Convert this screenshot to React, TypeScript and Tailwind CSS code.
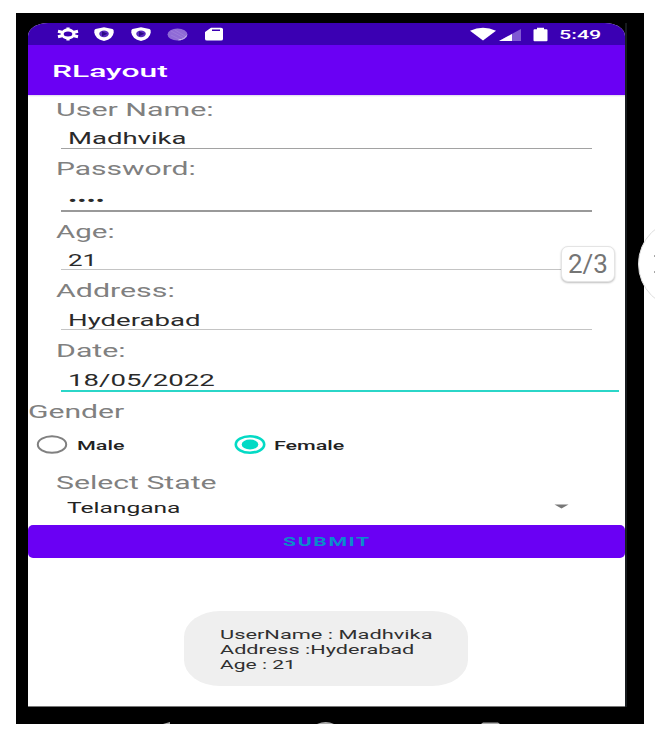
import { useLayoutEffect, useRef, useState } from "react";
import type { ReactNode } from "react";

type WideProps = { children: ReactNode; width: number; className?: string };

/* Text stretched horizontally to fill an exact width. */
function Wide({ children, width, className = "" }: WideProps) {
  const ref = useRef<HTMLSpanElement>(null);
  const [scale, setScale] = useState(1);
  useLayoutEffect(() => {
    if (ref.current) setScale(width / ref.current.offsetWidth);
  }, [width]);
  return (
    <span className={`block shrink-0 ${className}`} style={{ width }}>
      <span
        ref={ref}
        className="inline-block origin-left whitespace-pre"
        style={{ transform: `scaleX(${scale})` }}
      >
        {children}
      </span>
    </span>
  );
}

const label = "flex items-center text-[18px] leading-none text-[#808080]";
const value = "flex items-center pl-[7px] text-[17px] leading-none text-[#2a2a2a]";

function StatusBar() {
  return (
    <div className="flex h-[22px] items-center bg-[#3b00b3] text-white">
      <svg className="ml-[28px] h-[14px] w-[24px]" viewBox="0 0 24 14">
        <ellipse cx="12" cy="7" rx="5.800" ry="4" fill="none" stroke="#fff" strokeWidth="3" />
        <path
          d="M12 .5v2.500M12 11v2.500M2 4.300l4 .9M2 9.700l4-.9M22 4.300l-4 .9M22 9.700l-4-.9"
          stroke="#fff"
          strokeWidth="3.200"
        />
      </svg>
      {[0, 1].map((i) => (
        <svg key={i} className="ml-[14px] mr-[3px] h-[14px] w-[20px]" viewBox="0 0 20 14" fill="currentColor">
          <path d="M10 .3l8.500 1.800Q20 2.500 19.700 5.500 19 12 10 14 1 12 .3 5.500 0 2.500 1.500 2.100z" />
          <ellipse cx="10" cy="6.800" rx="4.800" ry="3.400" fill="#5a2bc0" />
          <path d="M8 4.300v5L13.500 6.800z" fill="#2c0a85" />
        </svg>
      ))}
      <svg className="ml-[13px] h-[13px] w-[21px]" viewBox="0 0 21 13">
        <ellipse cx="10.500" cy="6.500" rx="10" ry="6" fill="#8f6bd6" />
        <path d="M4 3l13 7M4 7l10 5M8 2l10 6" stroke="#9c7bdb" strokeWidth="1" />
        <path d="M19.500 7.500a10 6 0 0 1-8 4.500" stroke="#d0c0f0" fill="none" />
      </svg>
      <svg className="ml-[16px] h-[14px] w-[20px]" viewBox="0 0 20 14" fill="currentColor">
        <path fillRule="evenodd" d="M7 .8h10q2 0 2 1.500v9.700q0 1.500-2 1.500H3q-2 0-2-1.500V5zM8 2.600v1.300h8V2.600z" />
      </svg>
      <svg className="ml-auto h-[14px] w-[28px]" viewBox="0 0 28 14" fill="currentColor">
        <path d="M1 3.800Q14-2.200 27 3.800L14 13.600z" />
      </svg>
      <svg className="ml-[2px] h-[13px] w-[22px]" viewBox="0 0 22 13">
        <path d="M0 13L22 1v12z" fill="#8159d3" />
        <path d="M0 13L13 6v7z" fill="#fff" />
      </svg>
      <svg className="ml-[12px] h-[15px] w-[15px]" viewBox="0 0 15 15" fill="currentColor">
        <path d="M4 .7h7v1.600h2.500q1 0 1 1v10q0 1-1 1h-12q-1 0-1-1v-10q0-1 1-1H4z" />
      </svg>
      <Wide width={43} className="ml-[11px] mr-[23px] text-[13px] font-medium leading-none">5:49</Wide>
    </div>
  );
}

function Radio({ checked }: { checked?: boolean }) {
  return (
    <svg className="h-[20px] w-[32px] shrink-0" viewBox="0 0 32 20">
      <ellipse cx="16" cy="9.500" rx="14.200" ry="8.200" fill="none" stroke={checked ? "#03dac5" : "#808080"} strokeWidth={checked ? 2.600 : 2} />
      {checked && <ellipse cx="16" cy="9.500" rx="8.300" ry="5" fill="#03dac5" />}
    </svg>
  );
}

function Form() {
  return (
    <div className="flex flex-col bg-white">
      <div className="h-[2px] bg-gradient-to-b from-[#ddd4ea] to-white" />
      <div className="flex flex-col pl-[28px]">
        <div className={`${label} h-[25px]`}><Wide width={157}>User Name:</Wide></div>
        <div className="ml-[5px] w-[531px]">
          <div className={`${value} h-[27px] border-b border-[#a2a2a2] pt-[6px]`}><Wide width={118}>Madhvika</Wide></div>
        </div>
        <div className={`${label} h-[40px]`}><Wide width={140}>Password:</Wide></div>
        <div className="ml-[5px] w-[531px]">
          <div className={`${value} h-[23px] border-b-2 border-[#999] pt-[2px]`}>
            <Wide width={37} className="text-[14px]">••••</Wide>
          </div>
        </div>
        <div className={`${label} h-[40px]`}><Wide width={59}>Age:</Wide></div>
        <div className="ml-[5px] w-[531px]">
          <div className={`${value} h-[18px] border-b border-[#c4c4c4]`}><Wide width={29}>21</Wide></div>
        </div>
        <div className={`${label} h-[41px]`}><Wide width={118}>Address:</Wide></div>
        <div className="ml-[5px] w-[531px]">
          <div className={`${value} h-[19px] border-b border-[#c4c4c4]`}><Wide width={133}>Hyderabad</Wide></div>
        </div>
        <div className={`${label} h-[41px]`}><Wide width={69}>Date:</Wide></div>
        <div className="ml-[5px] w-[558px]">
          <div className={`${value} h-[21px] border-b-2 border-[#2bd6c8]`}><Wide width={146}>18/05/2022</Wide></div>
        </div>
      </div>
      <div className={`${label} h-[40px]`}><Wide width={97}>Gender</Wide></div>
      <div className="flex h-[26px] items-center pl-[8px] text-[13px] font-medium leading-none text-[#222]">
        <Radio />
        <Wide width={48} className="ml-[9px]">Male</Wide>
        <div className="ml-[109px] flex items-center">
          <Radio checked />
          <Wide width={71} className="ml-[8px]">Female</Wide>
        </div>
      </div>
      <div className="pl-[28px]">
        <div className={`${label} h-[36px] pt-[14px]`}><Wide width={161}>Select State</Wide></div>
        <div className="flex h-[31px] items-center pl-[11px] pb-[3px] text-[15px] leading-none text-[#222]">
          <Wide width={113}>Telangana</Wide>
          <svg className="mb-[3px] ml-auto mr-[56px] h-[5px] w-[15px]" viewBox="0 0 15 5">
            <path d="M.5.500h14L7.500 4.500z" fill="#777" />
          </svg>
        </div>
      </div>
      <button className="flex h-[33px] items-center justify-center rounded-[5px] bg-[#6a00f4] text-[13px] font-bold leading-none tracking-[1px] text-[#0a8ccb]">
        <Wide width={88} className="text-left">SUBMIT</Wide>
      </button>
      <div className="mt-[53px] ml-[156px] flex h-[75px] w-[284px] flex-col rounded-[36px/26px] bg-[#efefef] pt-[16px] pl-[36px] text-left text-[13px] leading-[15px] text-[#303030]">
        <Wide width={213}>UserName : Madhvika</Wide>
        <Wide width={195}>Address :Hyderabad</Wide>
        <Wide width={76}>Age : 21</Wide>
      </div>
    </div>
  );
}

export default function App() {
  return (
    <div className="relative h-[733px] w-[655px] overflow-hidden bg-white font-['Roboto',sans-serif]">
      <div className="pt-[13px] pl-[16px]">
        <div className="flex h-[711px] w-[628px] flex-col bg-black pt-[10px] pl-[12px]">
          <div className="h-[684px] w-[599px] border-r-2 border-[#171b1e]">
            <div className="h-[683px] overflow-hidden rounded-[20px_20px_0_0/13px_13px_0_0] bg-white">
              <StatusBar />
              <div className="flex h-[50px] items-center bg-[#6a00f4] pl-[24px] pt-[2px] text-[17px] font-medium leading-none text-white">
                <Wide width={116}>RLayout</Wide>
              </div>
              <Form />
            </div>
            <div className="h-px bg-[#777]" />
          </div>
          <svg className="mt-auto h-[3px] w-[599px]" viewBox="0 0 599 3" fill="#aaa">
            <path d="M135 3l7-2v2z" />
            <path d="M289 3q9-4 17 0z" />
            <path d="M453 3l2-1.500h15l2 1.500z" />
          </svg>
        </div>
      </div>
      <div className="absolute top-[246px] left-[561px] flex h-[36px] w-[54px] items-center justify-center rounded-[7px] border border-[#e4e4e4] bg-white text-[26px] leading-none text-[#757575] shadow-[0_1px_2px_rgba(0,0,0,0.25)]">
        <Wide width={40}>2/3</Wide>
      </div>
      <div className="absolute top-[219px] left-[638px] flex h-[90px] w-[90px] items-center rounded-full border border-[#dedede] bg-white pl-[14px]">
        <svg className="h-[22px] w-[22px]" viewBox="0 0 22 22" stroke="#555" strokeWidth="3">
          <path d="M2 2l18 18M20 2L2 20" />
        </svg>
      </div>
    </div>
  );
}
